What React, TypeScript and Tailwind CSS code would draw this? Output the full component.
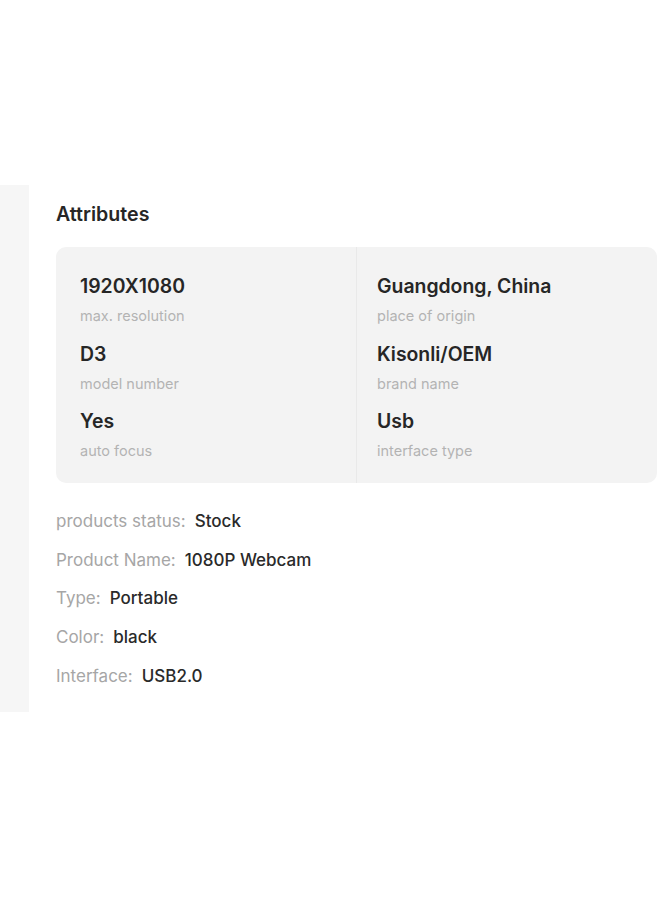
import React from "react";

const left = [
  { v: "1920X1080", l: "max. resolution" },
  { v: "D3", l: "model number" },
  { v: "Yes", l: "auto focus" },
];
const right = [
  { v: "Guangdong, China", l: "place of origin" },
  { v: "Kisonli/OEM", l: "brand name" },
  { v: "Usb", l: "interface type" },
];
const rows = [
  { k: "products status:", v: "Stock" },
  { k: "Product Name:", v: "1080P Webcam" },
  { k: "Type:", v: "Portable" },
  { k: "Color:", v: "black" },
  { k: "Interface:", v: "USB2.0" },
];

function Col({ items, className }: { items: { v: string; l: string }[]; className: string }) {
  return (
    <div className={className}>
      {items.map((it) => (
        <div key={it.l} className="h-[67.5px]">
          <div className="text-[19.4px] leading-[22px] font-semibold text-[#262626]">{it.v}</div>
          <div className="mt-[11px] text-[14.5px] leading-[16px] text-[#b3b3b3]">{it.l}</div>
        </div>
      ))}
    </div>
  );
}

export default function App() {
  return (
    <div className="w-[660px] h-[900px] bg-white overflow-hidden" style={{ fontFamily: "Inter, 'Noto Sans', sans-serif" }}>
      <div className="h-[185px]" />
      <div className="flex">
        <div className="w-[29px] h-[527px] bg-[#f6f6f6] shrink-0" />
        <div className="pl-[27px] flex-1">
          <div className="pt-[18px] text-[19.6px] leading-[22px] font-semibold text-[#262626]">Attributes</div>
          <div className="mt-[22px] w-[601px] h-[236px] rounded-[10px] bg-[#f3f3f3] flex">
            <Col items={left} className="w-[301px] pl-[24px] pt-[28px] border-r border-[#e9e9e9]" />
            <Col items={right} className="flex-1 pl-[20px] pt-[28px]" />
          </div>
          <div className="mt-[27px] flex flex-col">
            {rows.map((r) => (
              <div key={r.k} className="h-[38.7px] text-[17px] leading-[22px] flex">
                <span className="text-[#a6a6a6]">{r.k}</span>
                <span className="ml-[9px] font-medium text-[#2a2a2a]">{r.v}</span>
              </div>
            ))}
          </div>
        </div>
      </div>
    </div>
  );
}
